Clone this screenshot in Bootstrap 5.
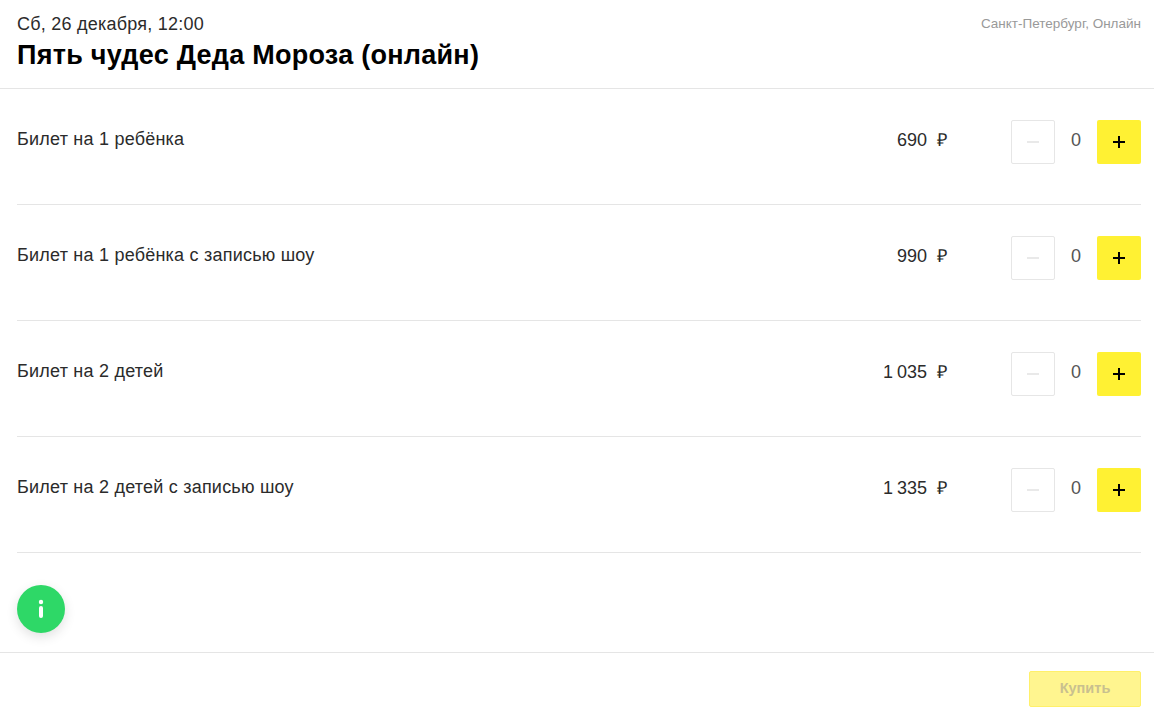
<!DOCTYPE html>
<html lang="ru">

<head>
    <meta charset="UTF-8">
    <meta name="viewport" content="width=device-width, initial-scale=1.0">
    <title>Пять чудес Деда Мороза (онлайн)</title>

    <link rel="stylesheet" href="https://cdn.jsdelivr.net/npm/bootstrap@5.3.0/dist/css/bootstrap.min.css">

    <style>
        body {
            font-family: "Liberation Sans", Arial, sans-serif;
            background-color: #fff;
            color: #2b2b2b;
            overflow: hidden;
        }

        .event-head {
            height: 89px;
            padding: 14px 13px 0 17px;
            border-bottom: 1px solid #e5e5e5;
        }

        .event-date {
            font-size: 18px;
            line-height: 20px;
            letter-spacing: .24px;
        }

        .event-title {
            font-size: 27px;
            line-height: 32px;
            font-weight: 700;
            letter-spacing: .26px;
            color: #000;
            margin: 5px 0 0;
        }

        .event-place {
            font-size: 13.5px;
            line-height: 20px;
            color: #999;
        }

        .ticket-list {
            padding: 0 13px 0 17px;
        }

        .ticket-row {
            height: 116px;
            padding-top: 31px;
            border-bottom: 1px solid #e5e5e5;
        }

        .ticket-name {
            font-size: 18px;
            line-height: 22px;
            letter-spacing: .22px;
            margin-top: 8px;
        }

        .ticket-price {
            font-size: 18px;
            line-height: 22px;
            word-spacing: -1px;
            margin: 9px 64px 0 0;
        }

        .ticket-price span {
            margin-left: 10px;
        }

        .qty-btn {
            width: 44px;
            height: 44px;
            padding: 0;
            border-radius: 2px;
        }

        .qty-minus {
            border: 1px solid #e6e6e6;
            background: #fff;
        }

        .qty-plus {
            border: 0;
            background: #fff133;
        }

        .qty-value {
            width: 42px;
            text-align: center;
            font-size: 18px;
            line-height: 22px;
            margin-top: 9px;
            color: #555;
        }

        .info-zone {
            height: 100px;
            padding: 32px 0 0 17px;
            border-bottom: 1px solid #e5e5e5;
        }

        .info-btn {
            width: 48px;
            height: 48px;
            border-radius: 50%;
            border: 0;
            padding: 0;
            background: #2ed867;
            box-shadow: 0 4px 12px rgba(0, 0, 0, .12);
        }

        .buy-zone {
            padding: 18px 13px 0 0;
        }

        .buy-btn {
            width: 112px;
            height: 36px;
            padding: 0;
            border: 1px solid #fff06a;
            border-radius: 2px;
            background: #fff58f;
            color: #c9c08f;
            font-size: 14.5px;
            font-weight: 700;
        }
    </style>
</head>

<body>

    <header class="event-head d-flex justify-content-between align-items-start">
        <div>
            <div class="event-date">Сб, 26 декабря, 12:00</div>
            <h1 class="event-title">Пять чудес Деда Мороза (онлайн)</h1>
        </div>
        <div class="event-place">Санкт-Петербург, Онлайн</div>
    </header>

    <div id="ticket-list" class="ticket-list"></div>

    <div class="info-zone">
        <button class="info-btn d-flex align-items-center justify-content-center" type="button" aria-label="Информация">
            <svg width="6" height="20" viewBox="0 0 6 20">
                <circle cx="3" cy="3" r="2.2" fill="#fff" />
                <rect x="1" y="7" width="4" height="12" rx="2" fill="#fff" />
            </svg>
        </button>
    </div>

    <div class="buy-zone d-flex justify-content-end">
        <button class="buy-btn" type="button" disabled>Купить</button>
    </div>

    <script>
        const tickets = [
            { name: 'Билет на 1 ребёнка', price: '690' },
            { name: 'Билет на 1 ребёнка с записью шоу', price: '990' },
            { name: 'Билет на 2 детей', price: '1 035' },
            { name: 'Билет на 2 детей с записью шоу', price: '1 335' }
        ];

        const list = document.getElementById('ticket-list');
        tickets.forEach(ticket => {
            const row = document.createElement('div');
            row.className = 'ticket-row d-flex align-items-start';
            row.innerHTML = `
                <div class="ticket-name flex-grow-1">${ticket.name}</div>
                <div class="ticket-price">${ticket.price}<span>₽</span></div>
                <button class="qty-btn qty-minus d-flex align-items-center justify-content-center" type="button" aria-label="Меньше">
                    <svg width="12" height="12" viewBox="0 0 12 12"><rect y="5" width="12" height="2" fill="#e9e9e9" /></svg>
                </button>
                <div class="qty-value">0</div>
                <button class="qty-btn qty-plus d-flex align-items-center justify-content-center" type="button" aria-label="Больше">
                    <svg width="12" height="12" viewBox="0 0 12 12"><path d="M0 6h12M6 0v12" stroke="#000" stroke-width="2" fill="none" /></svg>
                </button>`;
            list.appendChild(row);
        });
    </script>

    <script src="https://cdn.jsdelivr.net/npm/bootstrap@5.3.0/dist/js/bootstrap.bundle.min.js"></script>

</body>

</html>
